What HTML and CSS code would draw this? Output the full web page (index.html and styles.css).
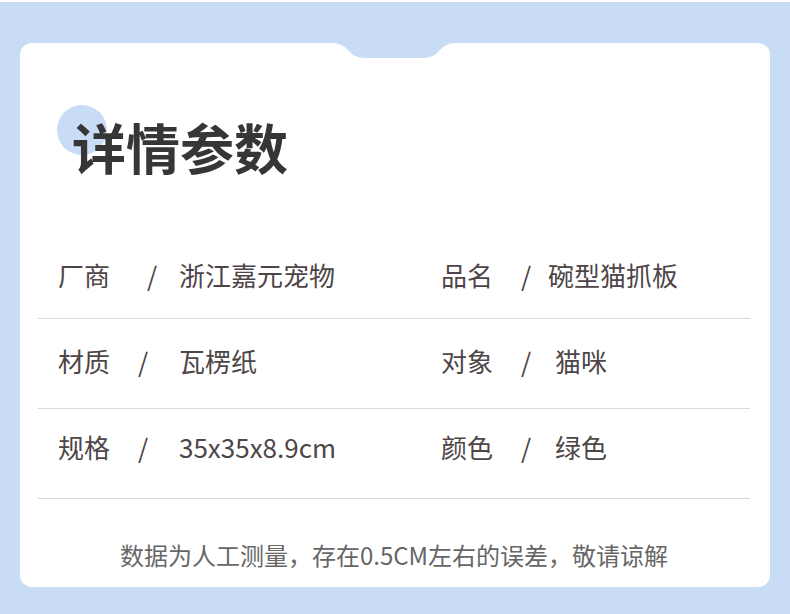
FILE: index.html
```html
<html><head><title>详情参数</title>
<link rel="stylesheet" href="styles.css">
</head>
<body>

<div class="sheet">
  <div class="card">
    <svg class="notch" viewBox="0 0 124 17" width="124" height="17">
      <path d="M0 0 L0 2 Q10 2 16 9 Q22 17 33 17 L91 17 Q102 17 108 9 Q114 2 124 2 L124 0 Z" fill="#c9dcf5"/>
    </svg>
    <span class="dot"></span>
    <h1 class="title">详情参数</h1>

    <div class="params">
      <div class="row">
        <div class="cell"><span class="label">厂商</span><span class="slash wide">/</span><span class="value">浙江嘉元宠物</span></div>
        <div class="cell right"><span class="label">品名</span><span class="slash">/</span><span class="value">碗型猫抓板</span></div>
      </div>
      <div class="row">
        <div class="cell"><span class="label">材质</span><span class="slash">/</span><span class="value">瓦楞纸</span></div>
        <div class="cell right"><span class="label">对象</span><span class="slash">/</span><span class="value far">猫咪</span></div>
      </div>
      <div class="row">
        <div class="cell"><span class="label">规格</span><span class="slash">/</span><span class="value">35x35x8.9cm</span></div>
        <div class="cell right"><span class="label">颜色</span><span class="slash">/</span><span class="value far">绿色</span></div>
      </div>
    </div>

    <p class="note">数据为人工测量，存在0.5CM左右的误差，敬请谅解</p>
  </div>
</div>

</body></html>
```

FILE: styles.css
```css
:root {
  --blue: #c9dcf5;
  --ink: #4d4547;
  --line: #d9d9d9;
}

body {
  margin: 0;
  padding: 0;
  background: var(--blue);
  border-top: 2px solid #fff;
  font-family: "Noto Sans CJK SC", "Noto Sans", sans-serif;
  overflow: hidden;
}

.sheet {
  padding: 41px 20px 27px 20px;
}

.card {
  position: relative;
  background: #fff;
  border-radius: 12px;
  height: 544px;
  padding: 0 20px 0 18px;
  box-sizing: border-box;
}

.notch {
  position: absolute;
  top: -2px;
  left: 312px;
  display: block;
}

.dot {
  position: absolute;
  left: 37px;
  top: 62px;
  width: 50px;
  height: 50px;
  border-radius: 50%;
  background: var(--blue);
}

.title {
  position: relative;
  margin: 0;
  padding: 74px 0 0 34px;
  font-size: 54px;
  line-height: 60px;
  font-weight: 700;
  color: #363636;
}

.params {
  margin-top: 52px;
}

.row {
  display: flex;
  height: 89px;
  align-items: center;
  border-bottom: 1px solid var(--line);
}

.row:nth-child(2) {
  padding-bottom: 8px;
  height: 81px;
}

.row:nth-child(3) {
  padding-bottom: 16px;
  height: 73px;
}

.cell {
  display: flex;
  align-items: center;
  width: 403px;
  padding-left: 20px;
  box-sizing: border-box;
  font-size: 26px;
  line-height: 30px;
  color: var(--ink);
  padding-top: 2px;
}

.cell.right {
  width: auto;
  padding-left: 0;
}

.label {
  width: 80px;
}

.slash {
  width: 41px;
}

.slash.wide {
  margin-left: 9px;
  width: 32px;
}

.right .slash {
  width: 27px;
}

.right .value.far {
  margin-left: 7px;
}

.note {
  margin: 41px 0 0 0;
  text-align: center;
  font-size: 24px;
  line-height: 30px;
  color: #666;
}
```
